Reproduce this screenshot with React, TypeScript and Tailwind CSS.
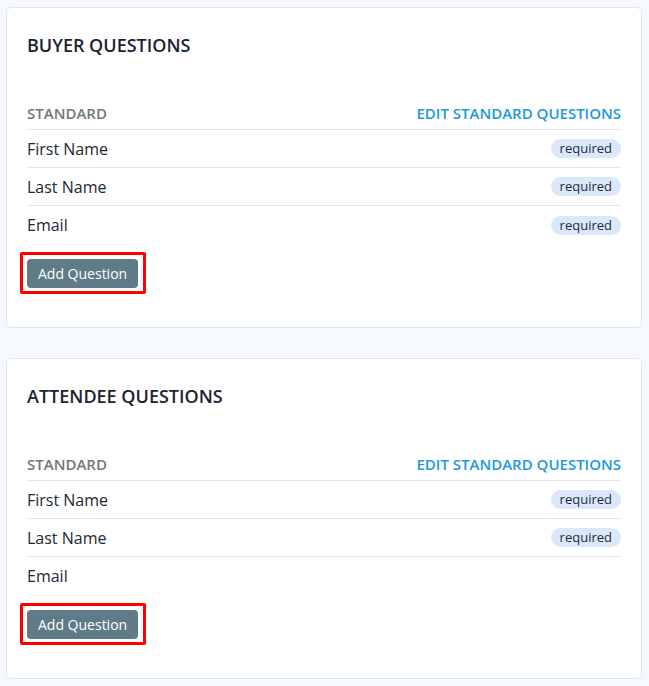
import React from "react";

type Row = { label: string; required: boolean };

function Section({ title, rows }: { title: string; rows: Row[] }) {
  return (
    <div className="bg-white border border-[#dde6ee] rounded-[5px] px-[20px] pt-[20px] pb-[39px]">
      <div className="h-[34px] leading-[34px] text-[18px] font-semibold text-[#1b2431] mb-[36px]">
        {title}
      </div>
      <div className="flex items-center justify-between h-[32px] border-b border-[#e3e6e9]">
        <span className="text-[15px] font-semibold text-[#72777d]">STANDARD</span>
        <span className="text-[15px] font-semibold text-[#1b9ade]">EDIT STANDARD QUESTIONS</span>
      </div>
      {rows.map((r, i) => (
        <div
          key={r.label}
          className={
            i < rows.length - 1
              ? "flex items-center justify-between h-[38px] border-b border-[#e3e6e9]"
              : "flex items-center justify-between h-[38px]"
          }
        >
          <span className="text-[16px] text-[#222831]">{r.label}</span>
          {r.required && (
            <span className="h-[19px] leading-[19px] px-[9px] rounded-full bg-[#dbe8fa] text-[13px] text-[#1d2b45]">
              required
            </span>
          )}
        </div>
      ))}
      <div className="mt-[15px] flex">
        <div className="relative">
          <span className="absolute -top-[7px] -left-[7px] -right-[8px] -bottom-[6px] border-[3px] border-[#ff0000] rounded-[2px] pointer-events-none" />
          <button className="relative h-[29px] px-[11px] rounded-[4px] bg-[#5f7b88] text-white text-[14px] leading-[29px]">
            Add Question
          </button>
        </div>
      </div>
    </div>
  );
}

export default function App() {
  return (
    <div
      className="min-h-[686px] bg-[#f5f9fd] pl-[6px] pr-[7px] pt-[7px] pb-[6px] flex flex-col gap-[30px]"
      style={{ fontFamily: '"Open Sans", "Noto Sans", sans-serif' }}
    >
      <Section
        title="BUYER QUESTIONS"
        rows={[
          { label: "First Name", required: true },
          { label: "Last Name", required: true },
          { label: "Email", required: true },
        ]}
      />
      <Section
        title="ATTENDEE QUESTIONS"
        rows={[
          { label: "First Name", required: true },
          { label: "Last Name", required: true },
          { label: "Email", required: false },
        ]}
      />
    </div>
  );
}
